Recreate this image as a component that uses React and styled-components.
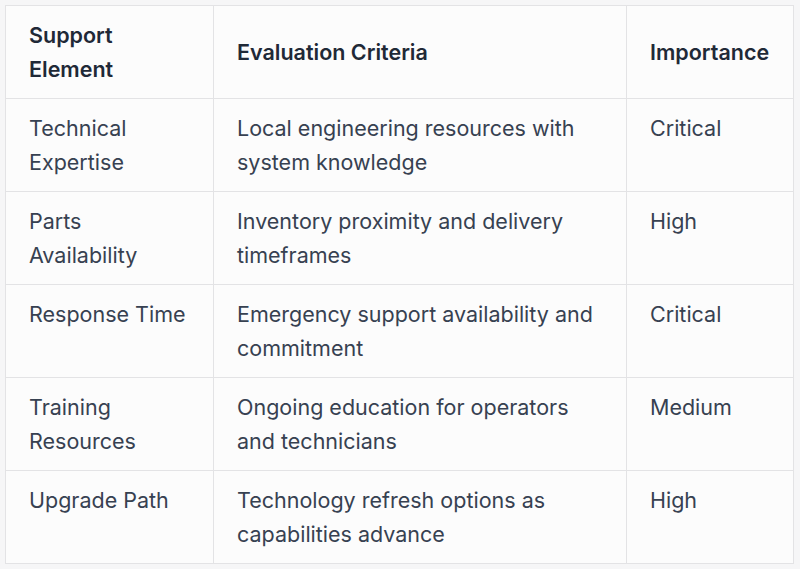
import React from "react";
import styled, { createGlobalStyle } from "styled-components";

const GlobalStyle = createGlobalStyle`
  html, body {
    margin: 0;
    padding: 0;
    background: #f6f6f7;
  }
  body {
    font-family: Inter, "Noto Sans", "Liberation Sans", sans-serif;
  }
  * {
    box-sizing: border-box;
  }
`;

const PageWrapper = styled("div")`
  padding: 5px 7px 7px 5px;
`;

const TableWrapper = styled("table")`
  width: 788px;
  border-collapse: collapse;
  table-layout: fixed;
  background: #fcfcfc;
  border: 1px solid #e3e3e5;
`;

const Column = styled("col")`
  width: ${(p) => p.width}px;
`;

const HeadCell = styled("th")`
  text-align: left;
  vertical-align: middle;
  padding: 12px 23px;
  border: 1px solid #e3e3e5;
  font-size: 21.5px;
  line-height: 34px;
  font-weight: 600;
  color: #1f2937;
`;

const BodyCell = styled("td")`
  vertical-align: top;
  padding: 12px 23px;
  border: 1px solid #e3e3e5;
  font-size: 21.5px;
  line-height: 34px;
  font-weight: 400;
  color: #374151;
`;

const rows = [
  ["Technical Expertise", "Local engineering resources with system knowledge", "Critical"],
  ["Parts Availability", "Inventory proximity and delivery timeframes", "High"],
  ["Response Time", "Emergency support availability and commitment", "Critical"],
  ["Training Resources", "Ongoing education for operators and technicians", "Medium"],
  ["Upgrade Path", "Technology refresh options as capabilities advance", "High"],
];

function App() {
  return (
    <PageWrapper>
      <GlobalStyle />
      <TableWrapper>
        <colgroup>
          <Column width={208} />
          <Column width={413} />
          <Column width={167} />
        </colgroup>
        <thead>
          <tr>
            <HeadCell>Support Element</HeadCell>
            <HeadCell>Evaluation Criteria</HeadCell>
            <HeadCell>Importance</HeadCell>
          </tr>
        </thead>
        <tbody>
          {rows.map((row) => (
            <tr key={row[0]}>
              {row.map((cell) => (
                <BodyCell key={cell}>{cell}</BodyCell>
              ))}
            </tr>
          ))}
        </tbody>
      </TableWrapper>
    </PageWrapper>
  );
}

export default App;
